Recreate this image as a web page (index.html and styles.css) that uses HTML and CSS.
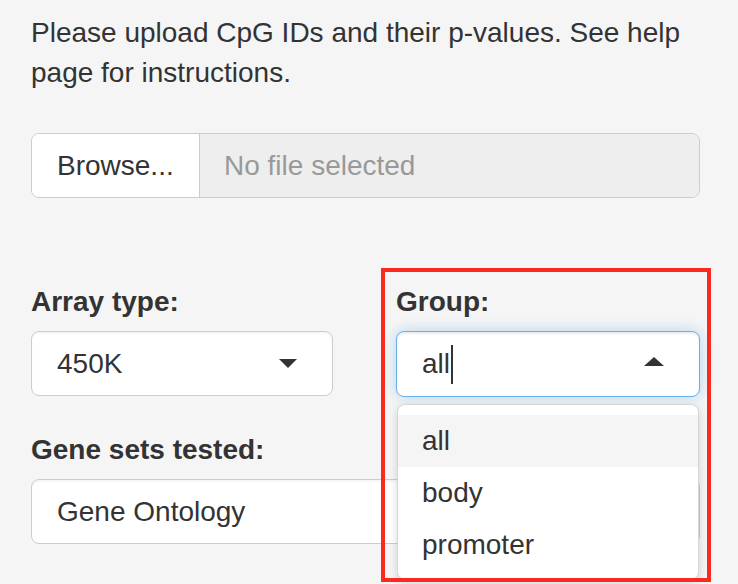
FILE: index.html
```html
<!DOCTYPE html>
<html>
<head>
<meta charset="utf-8">
<link rel="stylesheet" href="styles.css">
</head>
<body>
<div class="panel">
  <p class="intro">Please upload CpG IDs and their p-values. See help page for instructions.</p>
  <div class="file-input">
    <span class="browse">Browse...</span>
    <span class="file-name">No file selected</span>
  </div>
  <div class="grid">
    <div class="field">
      <label class="label">Array type:</label>
      <div class="select">
        <span class="value">450K</span>
        <span class="caret down"></span>
      </div>
    </div>
    <div class="field group-field">
      <label class="label">Group:</label>
      <div class="select focus">
        <span class="value">all</span><span class="cursor"></span>
        <span class="caret up"></span>
      </div>
      <div class="dropdown">
        <div class="option active">all</div>
        <div class="option">body</div>
        <div class="option">promoter</div>
      </div>
    </div>
    <div class="field full">
      <label class="label">Gene sets tested:</label>
      <div class="select">
        <span class="value">Gene Ontology</span>
      </div>
    </div>
  </div>
  <div class="highlight"></div>
</div>
</body>
</html>
```
FILE: styles.css
```css
html, body {
  margin: 0;
  padding: 0;
  background: #f5f5f5;
}
body {
  font-family: "Liberation Sans", Arial, sans-serif;
  color: #333;
  font-size: 28px;
  line-height: 40px;
}
.panel {
  position: relative;
  width: 669px;
  padding: 13px 38px 0 31px;
  height: 571px;
  overflow: hidden;
}
.intro {
  margin: 0 0 40px 0;
}
.file-input {
  display: flex;
  height: 63px;
  border: 1px solid #ccc;
  border-radius: 8px;
  overflow: hidden;
  margin-bottom: 84px;
}
.browse {
  display: flex;
  align-items: center;
  width: 142px;
  padding-left: 25px;
  background: #fff;
  border-right: 1px solid #ccc;
}
.file-name {
  flex: 1;
  display: flex;
  align-items: center;
  padding-left: 24px;
  background: #eee;
  color: #999;
}
.grid {
  display: grid;
  grid-template-columns: 302px 304px;
  column-gap: 63px;
  row-gap: 33px;
}
.field {
  position: relative;
}
.full {
  grid-column: 1 / 3;
}
.label {
  display: block;
  font-weight: bold;
  margin-bottom: 9px;
}
.select {
  position: relative;
  display: flex;
  align-items: center;
  height: 63px;
  background: #fff;
  border: 1px solid #ccc;
  border-radius: 8px;
  padding-left: 25px;
  box-shadow: inset 0 2px 2px rgba(0,0,0,.04);
}
.select.focus {
  height: 64px;
  border-color: #66afe9;
  box-shadow: inset 0 2px 2px rgba(0,0,0,.075), 0 0 14px rgba(102,175,233,.45);
}
.cursor {
  display: inline-block;
  width: 1.5px;
  height: 39px;
  background: #333;
  margin-left: 1px;
}
.caret {
  position: absolute;
  width: 0;
  height: 0;
  border-left: 10px solid transparent;
  border-right: 10px solid transparent;
}
.caret.down {
  right: 35px;
  border-left-width: 9px;
  border-right-width: 9px;
  border-top: 9px solid #333;
  top: 27px;
}
.caret.up {
  right: 35px;
  border-bottom: 9px solid #333;
  top: 25px;
}
.dropdown {
  position: absolute;
  z-index: 5;
  left: 1px;
  right: 1px;
  top: 122px;
  background: #fff;
  border: 1px solid #d6d6d6;
  border-radius: 8px;
  box-shadow: 0 3px 10px rgba(0,0,0,.15);
  padding: 10px 0 8px 0;
}
.option {
  height: 52px;
  line-height: 52px;
  padding-left: 24px;
}
.option.active {
  background: #f5f5f5;
}
.highlight {
  position: absolute;
  z-index: 10;
  left: 381px;
  top: 268px;
  width: 322px;
  height: 306px;
  border: 4px solid #fc2a1e;
}
```
